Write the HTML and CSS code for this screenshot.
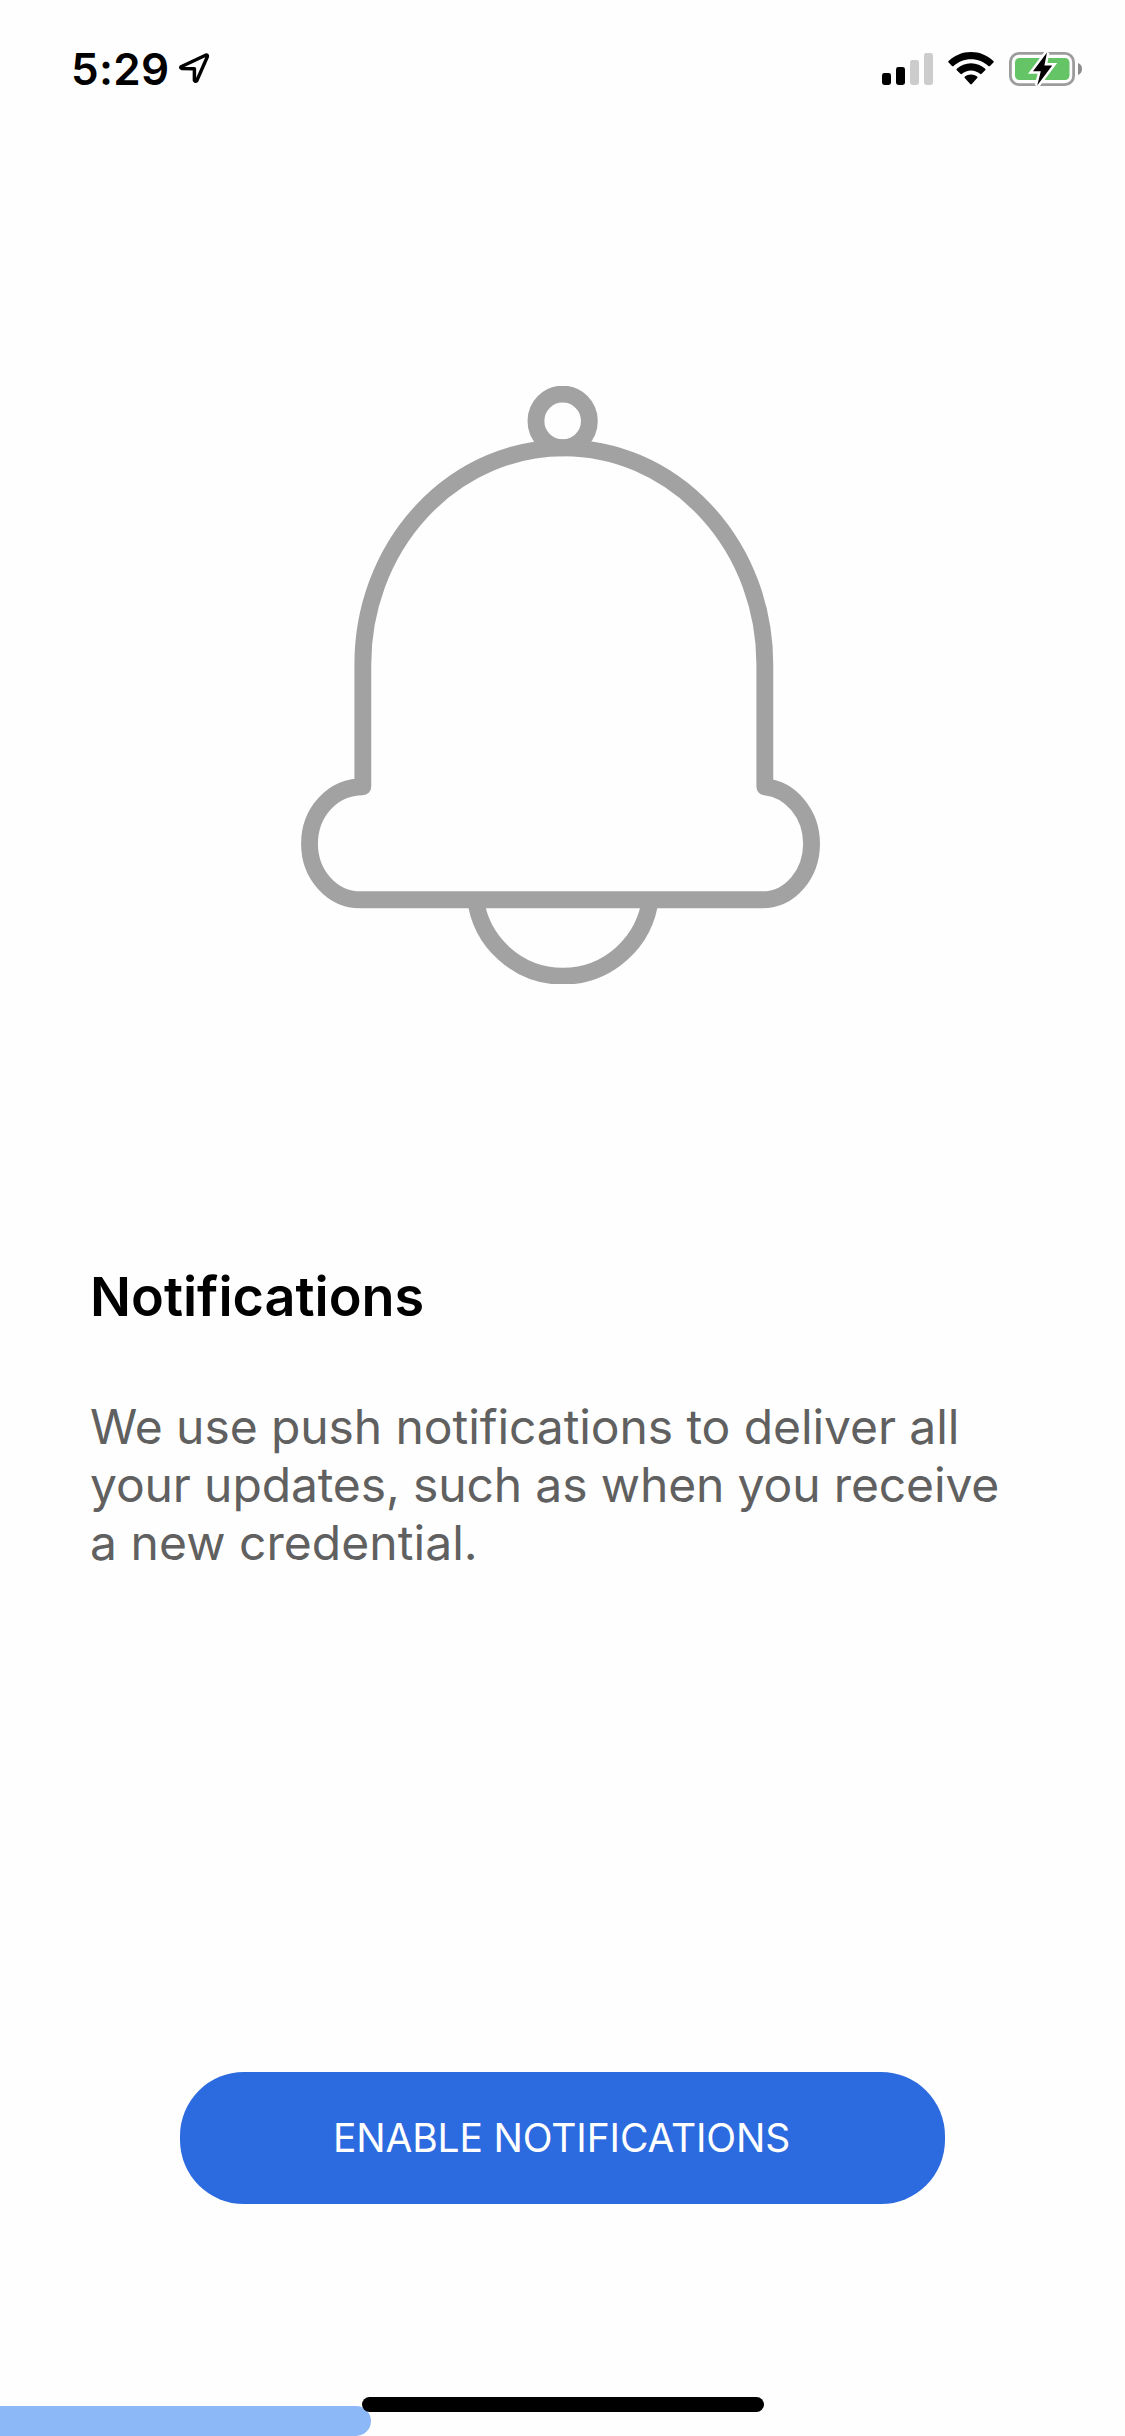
FILE: index.html
```
<!DOCTYPE html>
<html lang="en">
<head>
  <meta charset="utf-8">
  <title>Notifications</title>
  <link rel="stylesheet" href="styles.css">
</head>
<body>
  <div class="screen">
    <header class="status-bar">
      <div class="status-left">
        <span class="time">5:29</span>
        <svg class="location" viewBox="0 0 32 32">
          <path d="M2.1 14.2 27.4 2.3Q29.8 1.6 29.2 4L18.4 28.5Q17 30.2 15.9 28V16.2L3 15.9Q1.2 15.3 2.1 14.2Z"/>
        </svg>
      </div>
      <div class="status-right">
        <svg class="signal" viewBox="0 0 51 32">
          <rect x="0" y="20" width="9" height="12" rx="2.4"/>
          <rect x="14" y="14" width="9" height="18" rx="2.4"/>
          <rect class="dim" x="28" y="7" width="9" height="25" rx="2.4"/>
          <rect class="dim" x="42" y="0" width="9" height="32" rx="2.4"/>
        </svg>
        <svg class="wifi" viewBox="0 0 46 33">
          <path d="M23 0C14.3 0 6.5 3.4.6 8.9Q-.2 9.7.6 10.5L4 14Q4.8 14.7 5.6 14C10.2 9.8 16.3 7.2 23 7.2S35.8 9.8 40.4 14Q41.2 14.7 42 14L45.4 10.5Q46.2 9.7 45.4 8.9C39.5 3.4 31.7 0 23 0Z"/>
          <path d="M23 11.2C17.5 11.2 12.6 13.3 8.8 16.7Q8 17.5 8.8 18.3L12.4 21.8Q13.2 22.5 14 21.8C16.4 19.7 19.5 18.4 23 18.4S29.6 19.7 32 21.8Q32.8 22.5 33.6 21.8L37.2 18.3Q38 17.5 37.2 16.7C33.4 13.3 28.5 11.2 23 11.2Z"/>
          <path d="M23 22.4C20.5 22.4 18.6 23.2 16.9 24.5Q16 25.3 16.8 26.1L22.2 32Q23 32.8 23.8 32L29.2 26.1Q30 25.3 29.1 24.5C27.4 23.2 25.5 22.4 23 22.4Z"/>
        </svg>
        <svg class="battery" viewBox="0 0 74 34">
          <rect class="battery-case" x="1.4" y="1.4" width="63.2" height="31.2" rx="8.6"/>
          <path class="battery-cap" d="M69 11Q73 12.6 73 17T69 23Z"/>
          <rect class="battery-level" x="6" y="6" width="54.5" height="22" rx="4.5"/>
          <path class="bolt" d="M38 .5 24 19.2H31.8L28.2 33.5 43.2 13.6H35.4Z"/>
        </svg>
      </div>
    </header>

    <main class="content">
      <svg class="bell" viewBox="0 0 426.23 488" preserveAspectRatio="none">
        <circle cx="215.3" cy="28.5" r="21.9"/>
        <path d="M51.5 327V227A164.75 176.5 0 0 1 381 227V327C402 329 419.3 349 419.3 373.5S402 419.3 379 419.3H49.5C26.5 419.3 7.8 399 7.8 373.5S26.5 327 51.5 327Z"/>
        <path d="M143.7 417A72.2 72.2 0 0 0 287.3 417"/>
      </svg>
      <h1 class="title">Notifications</h1>
      <p class="description">
        <span class="line">We use push notifications to deliver all</span>
        <span class="line line-tight">your updates, such as when you receive</span>
        <span class="line line-loose">a new credential.</span>
      </p>
      <button class="enable-button" type="button">ENABLE NOTIFICATIONS</button>
    </main>

    <footer class="footer">
      <div class="progress"></div>
      <div class="home-indicator"></div>
    </footer>
  </div>
</body>
</html>
```
FILE: styles.css
```
* {
  box-sizing: border-box;
}

body {
  margin: 0;
  background: #fefefe;
  font-family: Inter, "Liberation Sans", sans-serif;
}

.screen {
  display: flex;
  flex-direction: column;
  width: 1125px;
  height: 2436px;
  overflow: hidden;
}

.status-bar {
  display: flex;
  justify-content: space-between;
  height: 132px;
  padding: 52px 42px 0 71px;
}

.status-left {
  display: flex;
  align-items: flex-start;
  gap: 10px;
  height: 34px;
}

.time {
  font-size: 44px;
  font-weight: 600;
  line-height: 34px;
  letter-spacing: 0.3px;
  color: #000;
}

.location {
  width: 31px;
  height: 31px;
  margin-top: 1px;
  fill: none;
  stroke: #000;
  stroke-width: 3.6;
  stroke-linejoin: round;
}

.status-right {
  display: flex;
  align-items: flex-start;
}

.signal {
  width: 51px;
  height: 32px;
  margin: 1px 15px 0 0;
}

.dim {
  fill: #ccc;
}

.wifi {
  width: 46px;
  height: 33px;
  margin-right: 15px;
}

.battery {
  width: 74px;
  height: 34px;
  overflow: visible;
}

.battery-case {
  fill: none;
  stroke: #9c9c9c;
  stroke-width: 2.8;
}

.battery-cap {
  fill: #8c8c8c;
}

.battery-level {
  fill: #65c466;
}

.bolt {
  stroke: #fff;
  stroke-width: 5;
  paint-order: stroke;
}

.content {
  display: flex;
  flex: 1;
  flex-direction: column;
  padding: 254px 90px 0;
}

.bell {
  width: 520px;
  height: 598px;
  margin-left: 210px;
  fill: none;
  stroke: #a2a2a2;
  stroke-width: 13.8;
  stroke-linejoin: round;
}

.title {
  margin: 279px 0 0;
  font-size: 54px;
  font-weight: 600;
  line-height: 67px;
  color: #000;
}

.description {
  margin: 68px 0 0;
  font-size: 48px;
  line-height: 58px;
  letter-spacing: -0.08px;
  color: #606060;
}

.line {
  display: block;
}

.line-tight {
  letter-spacing: -0.13px;
}

.line-loose {
  letter-spacing: 0.05px;
}

.enable-button {
  width: 765px;
  height: 131.5px;
  margin: 500px 0 0 90px;
  padding: 0 2px 0 0;
  border: 0;
  border-radius: 64px;
  background: #2c6adf;
  font-family: inherit;
  font-size: 39px;
  letter-spacing: -0.15px;
  color: #fff;
}

.footer {
  position: relative;
  height: 30px;
}

.progress {
  width: 371px;
  height: 30px;
  border-radius: 0 15px 15px 0;
  background: #8db8f8;
}

.home-indicator {
  position: absolute;
  top: -9px;
  left: 362px;
  width: 402px;
  height: 15px;
  border-radius: 8px;
  background: #000;
}
```
